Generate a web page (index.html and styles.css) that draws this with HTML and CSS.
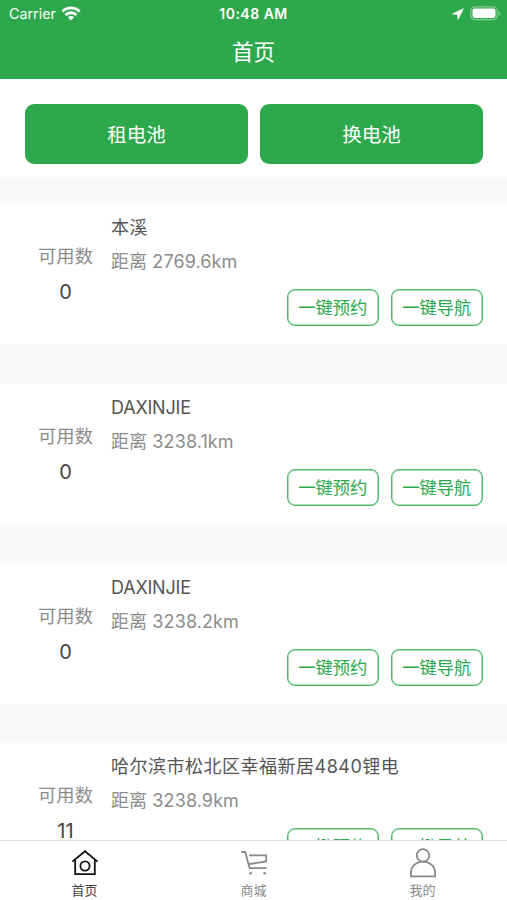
FILE: index.html
```
<!DOCTYPE html>
<html lang="zh-CN">

<head>
    <meta charset="UTF-8">
    <meta name="viewport" content="width=device-width, initial-scale=1.0">
    <title>首页</title>
    <link rel="stylesheet" href="styles.css">
</head>

<body>
    <header class="header">
        <div class="status-bar">
            <div class="status-left">
                <span class="carrier">Carrier</span>
                <svg class="wifi" width="20" height="16" viewBox="0 0 20 16" fill="none" stroke="currentColor" stroke-width="2.8">
                    <path d="M1.4 5.5a12.2 12.2 0 0 1 17.2 0" />
                    <path d="M4.5 9a7.8 7.8 0 0 1 11 0" />
                    <path d="M10 14.4L6.9 11.3a4.4 4.4 0 0 1 6.2 0z" fill="currentColor" stroke="none" />
                </svg>
            </div>
            <div class="time">10:48 AM</div>
            <div class="status-right">
                <svg width="12" height="12" viewBox="0 0 12 12" fill="currentColor" stroke="currentColor" stroke-width="0.8" stroke-linejoin="round">
                    <path d="M11.3 0.7L0.7 5.9l4.9 0.5 0.5 4.9z" />
                </svg>
                <svg width="31" height="15" viewBox="0 0 31 15">
                    <rect x="0.8" y="0.8" width="26.4" height="12.9" rx="4" fill="none" stroke="#fff" stroke-opacity="0.4" stroke-width="1.2" />
                    <rect x="2.5" y="2.4" width="23" height="9.7" rx="2.4" fill="#fff" />
                    <path d="M28.6 5v4.6c1.8-.7 1.8-3.9 0-4.6z" fill="#fff" fill-opacity="0.5" />
                </svg>
            </div>
        </div>
        <h1 class="title">首页</h1>
    </header>

    <main class="content">
        <div class="actions">
            <button class="action-btn">租电池</button>
            <button class="action-btn">换电池</button>
        </div>

        <div class="station-list">
            <div class="station">
                <div class="available">
                    <div class="label">可用数</div>
                    <div class="count">0</div>
                </div>
                <div class="info">
                    <div class="name">本溪</div>
                    <div class="distance">距离 2769.6km</div>
                    <div class="btns">
                        <button class="btn">一键预约</button>
                        <button class="btn">一键导航</button>
                    </div>
                </div>
            </div>

            <div class="station">
                <div class="available">
                    <div class="label">可用数</div>
                    <div class="count">0</div>
                </div>
                <div class="info">
                    <div class="name name-en">DAXINJIE</div>
                    <div class="distance">距离 3238.1km</div>
                    <div class="btns">
                        <button class="btn">一键预约</button>
                        <button class="btn">一键导航</button>
                    </div>
                </div>
            </div>

            <div class="station">
                <div class="available">
                    <div class="label">可用数</div>
                    <div class="count">0</div>
                </div>
                <div class="info">
                    <div class="name name-en">DAXINJIE</div>
                    <div class="distance">距离 3238.2km</div>
                    <div class="btns">
                        <button class="btn">一键预约</button>
                        <button class="btn">一键导航</button>
                    </div>
                </div>
            </div>

            <div class="station">
                <div class="available">
                    <div class="label">可用数</div>
                    <div class="count">11</div>
                </div>
                <div class="info">
                    <div class="name">哈尔滨市松北区幸福新居4840锂电</div>
                    <div class="distance">距离 3238.9km</div>
                    <div class="btns">
                        <button class="btn">一键预约</button>
                        <button class="btn">一键导航</button>
                    </div>
                </div>
            </div>
        </div>
    </main>

    <nav class="tab-bar">
        <a class="tab active">
            <svg width="30" height="32" viewBox="0 0 30 32" fill="none" stroke="currentColor" stroke-width="1.8">
                <path d="M2.4 13.6L15 3.2l12.6 10.4" />
                <path d="M5.2 11.8v14.4h19.6V11.8" />
                <circle cx="15" cy="18" r="4.6" />
            </svg>
            <span>首页</span>
        </a>
        <a class="tab">
            <svg width="30" height="32" viewBox="0 0 30 32" fill="none" stroke="currentColor" stroke-width="1.8">
                <path d="M2.3 4h3.9l4.4 16.2h16.9" />
                <path d="M10 7.3h17.2v6.2l-17.5 2.7" />
                <circle cx="11.5" cy="25.2" r="1.3" fill="currentColor" stroke="none" />
                <circle cx="25.6" cy="25.2" r="1.3" fill="currentColor" stroke="none" />
            </svg>
            <span>商城</span>
        </a>
        <a class="tab">
            <svg width="30" height="32" viewBox="0 0 30 32" fill="none" stroke="currentColor" stroke-width="1.8">
                <circle cx="15" cy="7.4" r="6.2" />
                <path d="M2.9 28.3v-3.2C2.9 18.6 8 13.7 15 13.7s12.1 4.9 12.1 11.4v3.2z" />
            </svg>
            <span>我的</span>
        </a>
    </nav>
</body>

</html>
```
FILE: styles.css
```
* {
    margin: 0;
    padding: 0;
    box-sizing: border-box;
}

body {
    height: 100vh;
    display: flex;
    flex-direction: column;
    overflow: hidden;
    background: #f9f9f9;
    font-family: Inter, "Noto Sans CJK SC", sans-serif;
}

button {
    font-family: inherit;
    cursor: pointer;
}

.header {
    flex: none;
    height: 79px;
    background: #2ea84c;
    color: #fff;
}

.status-bar {
    display: grid;
    grid-template-columns: 1fr auto 1fr;
    align-items: center;
    height: 27px;
    padding: 0 6px 0 9px;
}

.status-left,
.status-right {
    display: flex;
    align-items: center;
    gap: 6px;
}

.status-left {
    gap: 5px;
}

.status-right {
    justify-content: flex-end;
}

.carrier {
    font-size: 14.3px;
}

.time {
    font-size: 14px;
    font-weight: 600;
    letter-spacing: 0.5px;
    margin-right: 3px;
}

.title {
    font-size: 21.5px;
    font-weight: 400;
    line-height: 50px;
    text-align: center;
}

.content {
    flex: 1;
    min-height: 0;
    overflow: hidden;
}

.actions {
    display: flex;
    gap: 12px;
    height: 98px;
    padding: 25px 24px 12px 25px;
    background: #fff;
}

.action-btn {
    flex: 1;
    height: 60px;
    padding-bottom: 2px;
    border: none;
    border-radius: 9px;
    background: #2ea84c;
    color: #fff;
    font-size: 19.5px;
}

.station-list {
    display: flex;
    flex-direction: column;
    gap: 39.8px;
    margin-top: 27px;
}

.station {
    display: flex;
    height: 140px;
    padding-right: 24px;
    background: #fff;
}

.available {
    width: 111px;
    padding: 38px 0 0 20px;
    text-align: center;
}

.label {
    font-size: 18.3px;
    line-height: 28px;
    color: #8c8c8c;
}

.count {
    margin-top: 8px;
    font-size: 20px;
    line-height: 28px;
    color: #444;
}

.info {
    flex: 1;
    padding-top: 10px;
}

.name {
    font-size: 18px;
    line-height: 28px;
    letter-spacing: 0.5px;
    color: #555;
}

.name-en {
    letter-spacing: -0.2px;
}

.distance {
    margin-top: 6px;
    font-size: 18px;
    line-height: 28px;
    letter-spacing: 0.1px;
    color: #8c8c8c;
}

.btns {
    display: flex;
    justify-content: flex-end;
    gap: 11.5px;
    margin-top: 13px;
}

.btn {
    width: 92.5px;
    height: 37px;
    padding-bottom: 2px;
    border: 1px solid #52b96b;
    border-radius: 8px;
    box-shadow: inset 0 0 0 0.5px #52b96b;
    background: #fff;
    color: #2ea84c;
    font-size: 17.3px;
}

.tab-bar {
    flex: none;
    display: flex;
    height: 60px;
    border-top: 1px solid #dcdcdc;
    background: #fff;
}

.tab {
    flex: 1;
    display: flex;
    flex-direction: column;
    align-items: center;
    padding-top: 7px;
    color: #888;
    font-size: 13px;
}

.tab span {
    line-height: 20px;
}

.tab.active {
    color: #111;
}

.tab.active span {
    color: #444;
}
```
